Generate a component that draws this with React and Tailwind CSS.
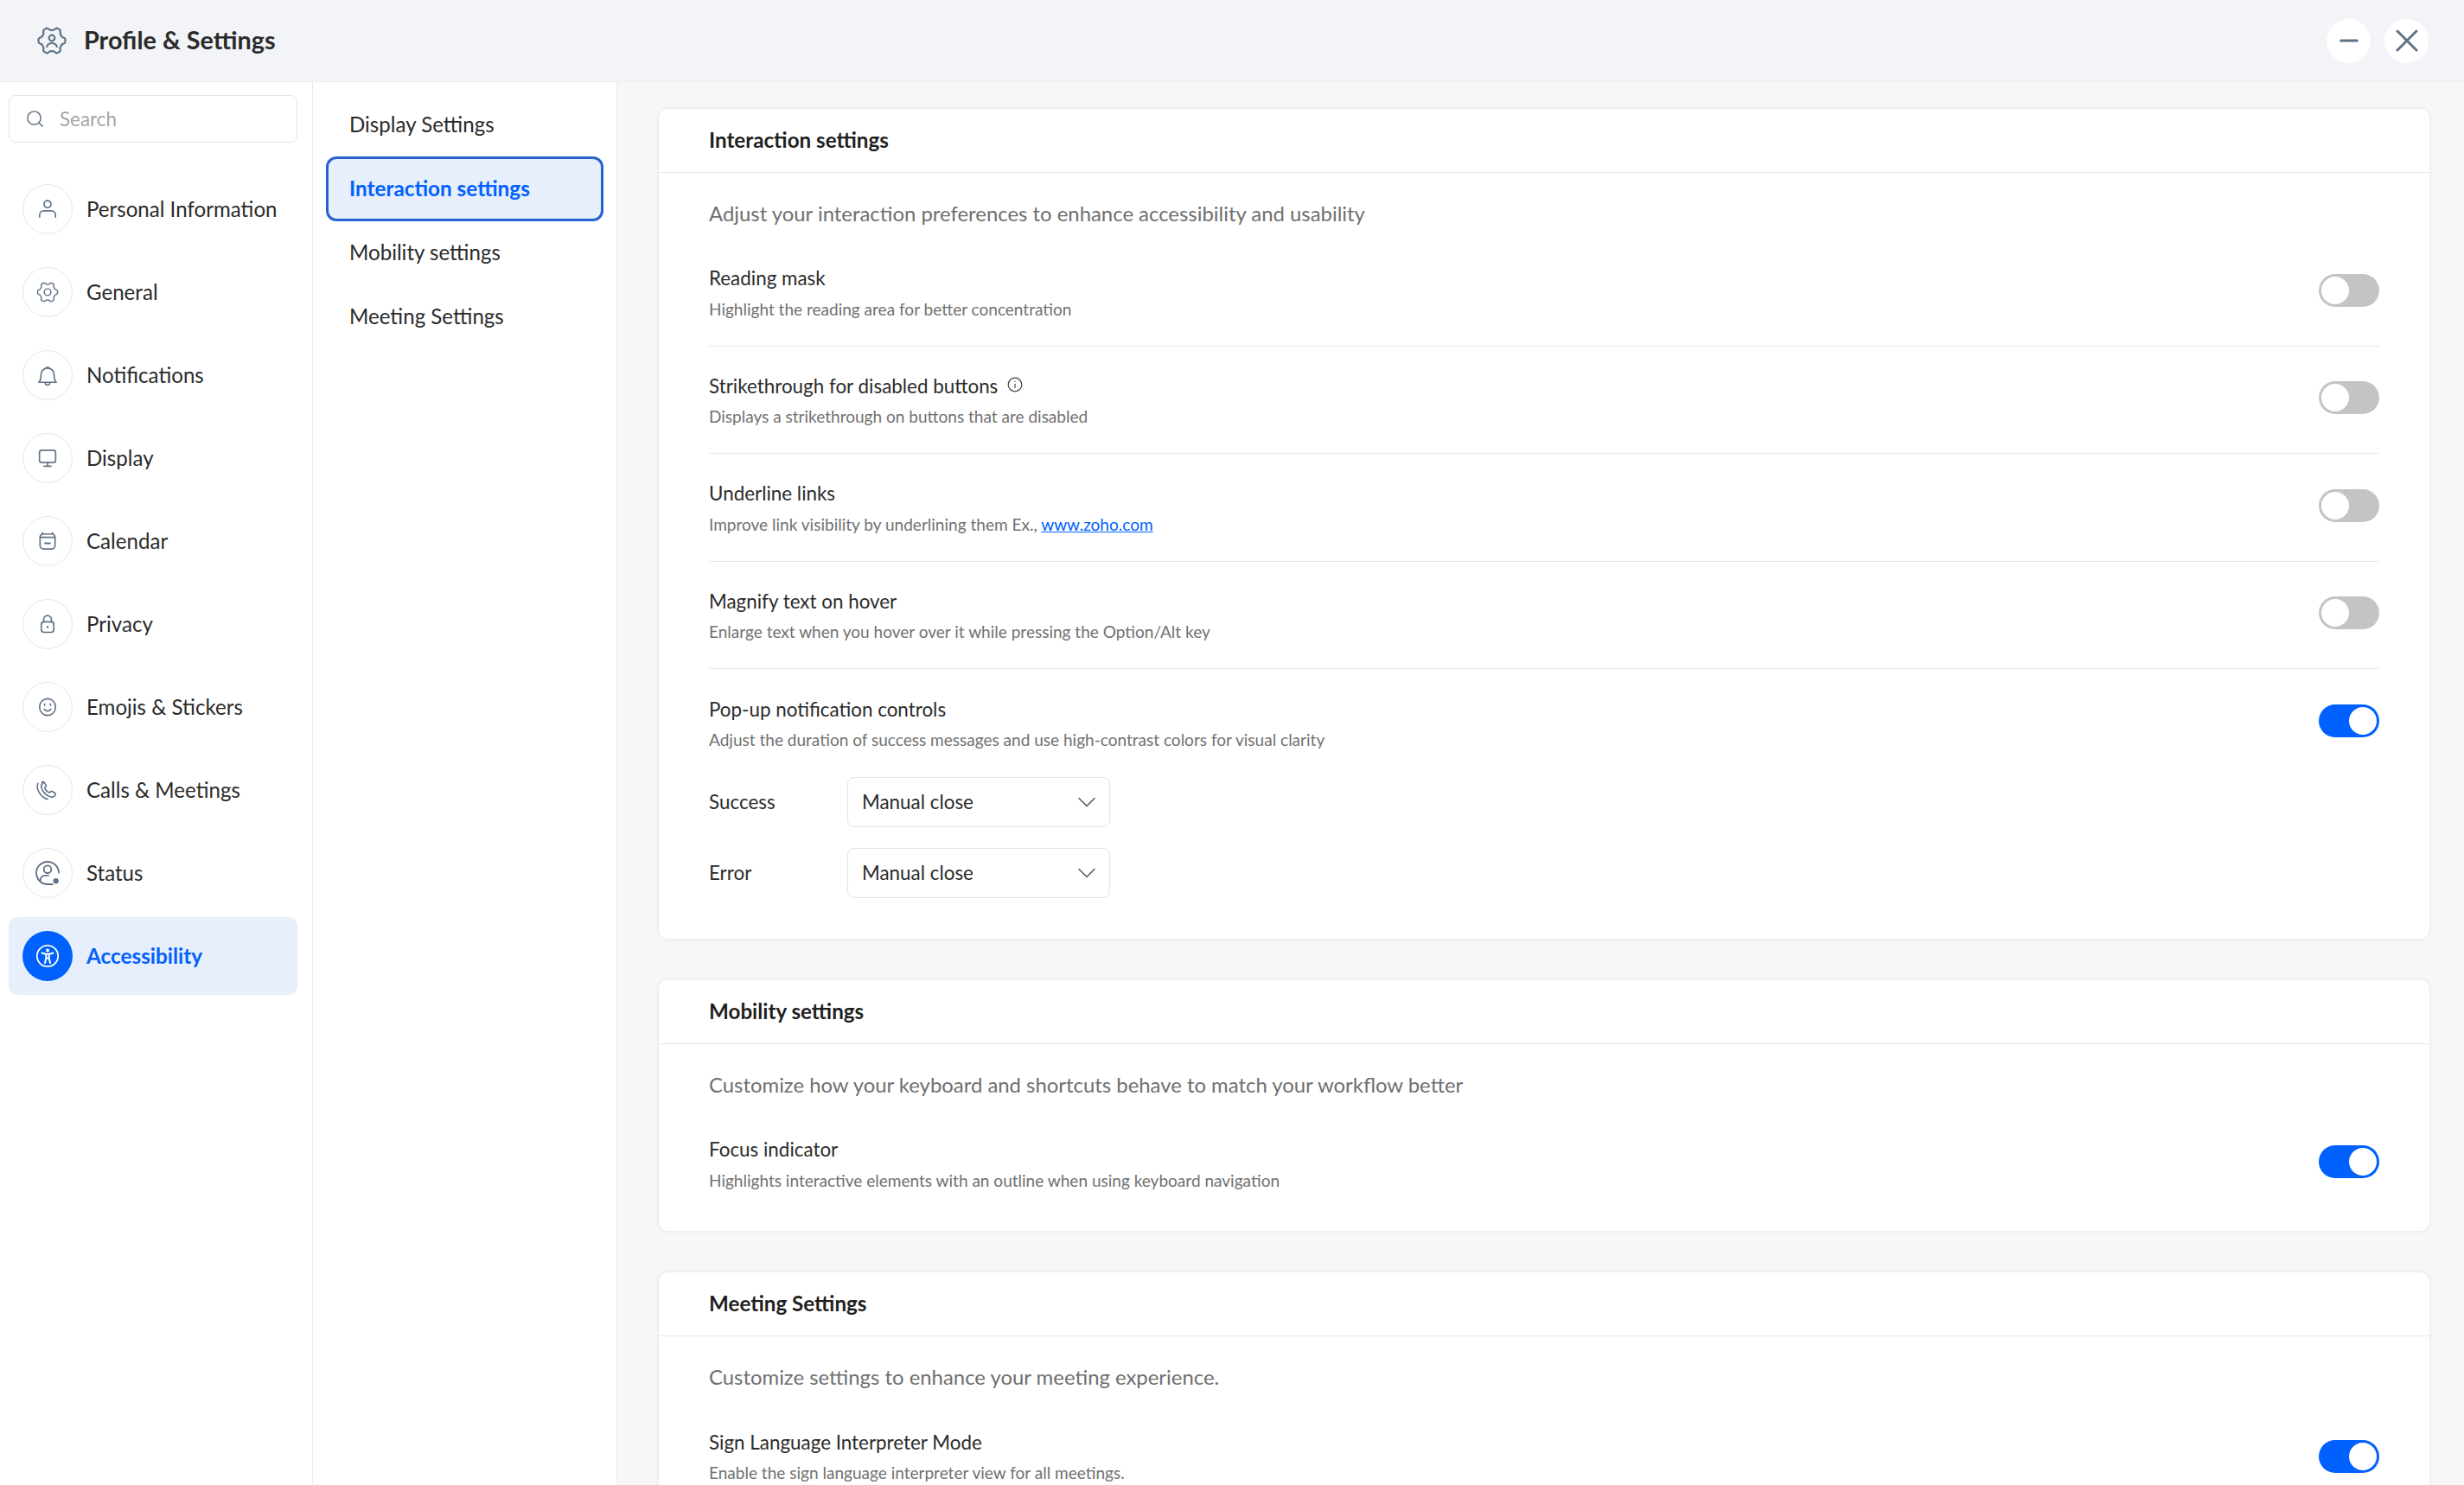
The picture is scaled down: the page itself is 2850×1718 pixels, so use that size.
import React from 'react';
import { Search, ChevronDown, X, Minus } from 'lucide-react';

// six lobed cog outline, flat tops and shallow valleys like the reference
const gearPath = (R) => {
  const pts = [];
  for (let i = 0; i < 96; i++) {
    const a = (i / 96) * Math.PI * 2;
    const c = Math.max(-1, Math.min(1, Math.cos(6 * a) * 1.700));
    const r = R * (0.895 + 0.105 * c);
    pts.push(`${(r * Math.cos(a)).toFixed(2)} ${(r * Math.sin(a)).toFixed(2)}`);
  }
  return `M${pts.join('L')}Z`;
};

// all nav icons are drawn around 0,0 so they sit in the middle of the circle
const Ico = ({ children, color = '#5f7286', sw = 1.7 }) => (
  <svg width="58" height="58" viewBox="-29 -29 58 58" fill="none" stroke={color} strokeWidth={sw} strokeLinecap="round" strokeLinejoin="round">
    {children}
  </svg>
);

const icons = {
  person: (
    <Ico>
      <circle cx="0" cy="-6" r="4.200" />
      <path d="M-9.500 9.500V7a5 5 0 0 1 5-5h9a5 5 0 0 1 5 5v2.500" />
    </Ico>
  ),
  gear: (
    <Ico sw={1.500}>
      <path d={gearPath(12)} />
      <circle cx="0" cy="0" r="4" />
    </Ico>
  ),
  bell: (
    <Ico>
      <path d="M-10.500 8.500h21c-2-2-2.600-3.600-2.600-6.500v-2.500a7.900 7.900 0 0 0-15.800 0V2c0 2.900-.6 4.500-2.600 6.500z" />
      <path d="M-1.700-8.200a1.800 1.800 0 0 1 3.400 0" />
      <path d="M-2.800 9a2.800 2.800 0 0 0 5.600 0" />
    </Ico>
  ),
  monitor: (
    <Ico>
      <rect x="-9.700" y="-9.500" width="19.400" height="14.800" rx="2.800" />
      <path d="M0 5.300v4.200M-4.200 9.700h8.400" />
    </Ico>
  ),
  calendar: (
    <Ico>
      <rect x="-9" y="-8.500" width="18" height="18" rx="4" />
      <path d="M-9-4.500h18M-6-10v2M6-10v2" />
      <path d="M-3 2.500h6" strokeWidth="2" />
    </Ico>
  ),
  lock: (
    <Ico>
      <rect x="-7.500" y="-2.700" width="15" height="12.500" rx="3.200" />
      <path d="M-4.700-2.500v-3a4.700 4.700 0 0 1 9.400 0v3" />
      <circle cx="0" cy="3.500" r="0.500" />
    </Ico>
  ),
  smile: (
    <Ico>
      <rect x="-9.500" y="-10" width="19" height="20" rx="9.500" />
      <path d="M-4 2.500c2 3 6 3 8 0" />
      <path d="M-3.500-3.500v1.500M3.500-3.500v1.500" />
    </Ico>
  ),
  phone: (
    <Ico>
      <path d="M-6.700-9.500c1-.7 2-.4 2.700.5l2 2.800c.6.900.4 1.800-.4 2.500l-1 .9c.8 2.700 3 5 5.900 6l1-1.100c.7-.8 1.600-.9 2.500-.3l2.700 1.800c.9.600 1.200 1.700.5 2.700-1 1.600-3 2.500-5.100 2-5.500-1.300-10.400-6.300-11.600-11.800-.4-2.200.5-4.100 2.700-6z" />
      <path d="M-11.500-8c-1.500 3-.8 7 1.500 11 2.400 4 6 7 10 8" />
    </Ico>
  ),
  status: (
    <Ico sw={1.900}>
      <path d="M13.500-.5a13.500 13.500 0 1 0-13.500 14h6" />
      <circle cx="0" cy="-4.500" r="4.500" />
      <path d="M-8.500 9v-.5a5.500 5.500 0 0 1 5.500-5.500h4" />
      <circle cx="10" cy="9.500" r="3.200" fill="#5f7286" stroke="none" />
    </Ico>
  ),
  access: (
    <Ico color="#fff" sw={1.800}>
      <circle cx="0" cy="0" r="12.200" />
      <circle cx="0" cy="-6.500" r="2" fill="#fff" stroke="none" />
      <path d="M-6.500-3.500 -2-2.200H2L6.500-3.500M-1.700-2v4.500L-3 8M1.700-2v4.500L3 8M-1.200 2.500H1.200" strokeWidth="2" />
    </Ico>
  ),
};

const navItems = [
  ['Personal Information', 'person'],
  ['General', 'gear'],
  ['Notifications', 'bell'],
  ['Display', 'monitor'],
  ['Calendar', 'calendar'],
  ['Privacy', 'lock'],
  ['Emojis & Stickers', 'smile'],
  ['Calls & Meetings', 'phone'],
  ['Status', 'status'],
];

const NavRow = ({ label, icon }) => (
  <div className="flex items-center h-[96px] pl-[16px] shrink-0">
    <div className="w-[58px] h-[58px] rounded-full border border-[#e6e6e6] flex items-center justify-center">{icons[icon]}</div>
    <span className="ml-[16px] text-[24.100px] text-[#2b2b2b]">{label}</span>
  </div>
);

const Toggle = ({ on, low }) => (
  <div className={`${on ? 'bg-[#0061fe] justify-end pr-[3px]' : 'bg-[#c4c4c4] pl-[3px]'} ${low ? 'mt-[2px]' : 'mb-1'} w-[70px] h-[38px] rounded-full flex items-center shrink-0`}>
    <div className="w-[32px] h-[32px] rounded-full bg-white" />
  </div>
);

const Row = ({ title, sub, on, low, info, last, children }) => (
  <div className={last ? 'flex items-center justify-between h-[124.500px]' : 'flex items-center justify-between h-[124.500px] border-b border-[#e8e8e8]'}>
    <div className="mt-1">
      <div className="flex items-center h-[29px] text-[22.400px] text-[#2b2b2b]">
        {title}
        {info && (
          <svg className="ml-[11px] mb-[4px]" width="18" height="18" viewBox="0 0 18 18" fill="none" stroke="#444" strokeWidth="1.200">
            <circle cx="9" cy="9" r="7.800" />
            <path d="M9 8v5M9 5v1" />
          </svg>
        )}
      </div>
      <div className="mt-[6px] h-[29px] leading-[29px] text-[19.050px] text-[#717171]">{sub || children}</div>
    </div>
    <Toggle on={on} low={low} />
  </div>
);

const Card = ({ title, desc, children }) => (
  <section className="bg-white rounded-[10px] shadow-[0_0_5px_rgba(0,0,0,0.09)] shrink-0">
    <h2 className="h-[74px] flex items-center px-[58px] border-b border-[#e8e8e8] text-[24.200px] font-bold text-[#1f1f1f]">{title}</h2>
    <div className="px-[58px]">
      <p className="pt-[32px] pb-[14px] leading-[30px] text-[23.900px] text-[#6f6f6f]">{desc}</p>
      {children}
    </div>
  </section>
);

const Select = ({ label }) => (
  <div className="flex items-center">
    <span className="w-[160px] text-[22.400px] text-[#2b2b2b]">{label}</span>
    <div className="w-[304px] h-[58px] rounded-[8px] border border-[#e4e4e4] flex items-center justify-between pl-[16px] pr-[8px]">
      <span className="text-[22.400px] text-[#2b2b2b]">Manual close</span>
      <ChevronDown size={36} strokeWidth={1} color="#555" />
    </div>
  </div>
);

const App = () => {
  return (
    <div className="h-[1718px] overflow-hidden flex flex-col bg-white font-['Lato','Liberation_Sans',sans-serif]">
      <header className="h-[95px] shrink-0 bg-[#f2f4f8] border-b border-[#eaecef] flex items-center pl-[43px] pr-[41px]">
        <svg width="34" height="34" viewBox="-17 -17 34 34" fill="none" stroke="#5f7286" strokeWidth="2.200" strokeLinecap="round" strokeLinejoin="round">
          <path d={gearPath(15.500)} />
          <circle cx="0" cy="-3" r="3.300" />
          <path d="M-5.800 7c.8-2.800 3-4 5.800-4s5 1.200 5.800 4" />
        </svg>
        <h1 className="ml-[20px] text-[28.800px] font-bold text-[#2a2a2a]">Profile &amp; Settings</h1>
        <div className="ml-auto flex gap-[16px]">
          <button className="w-[51px] h-[51px] rounded-full bg-white flex items-center justify-center"><Minus size={32} strokeWidth={2.250} color="#5f7286" /></button>
          <button className="w-[51px] h-[51px] rounded-full bg-white flex items-center justify-center"><X size={44} strokeWidth={1.600} color="#5f7286" /></button>
        </div>
      </header>
      <div className="flex-1 flex min-h-0">
        <aside className="w-[362px] shrink-0 border-r border-[#eaeaea] pl-[10px] pr-[17px] pt-[15px]">
          <div className="h-[55px] rounded-[8px] border border-[#e4e4e4] flex items-center pl-[18px]">
            <Search size={23} strokeWidth={1.500} color="#5f7286" />
            <span className="ml-[17px] text-[22.400px] text-[#a6a6a6]">Search</span>
          </div>
          <div className="mt-[29px] flex flex-col">
            {navItems.map(([label, icon]) => <NavRow key={label} label={label} icon={icon} />)}
            <div className="mt-[3px] h-[90px] rounded-[10px] bg-[#e7eefc] flex items-center pl-[16px]">
              <div className="w-[58px] h-[58px] rounded-full bg-[#0061fe] flex items-center justify-center">{icons.access}</div>
              <span className="ml-[16px] text-[24.300px] font-bold text-[#0061fe]">Accessibility</span>
            </div>
          </div>
        </aside>
        <nav className="w-[352px] shrink-0 border-r border-[#eaeaea] pl-[15px] pr-[15px] pt-[13px] flex flex-col">
          <div className="h-[73px] flex items-center pl-[27px] text-[24.100px] text-[#2b2b2b]">Display Settings</div>
          <div className="h-[75px] rounded-[12px] border-[3px] border-[#2561d0] bg-[#e7eefc] flex items-center pl-[24px] text-[24.300px] font-bold text-[#0061fe]">Interaction settings</div>
          <div className="h-[73px] flex items-center pl-[27px] text-[24.100px] text-[#2b2b2b]">Mobility settings</div>
          <div className="h-[74px] flex items-center pl-[27px] text-[24.100px] text-[#2b2b2b]">Meeting Settings</div>
        </nav>
        <main className="flex-1 min-w-0 bg-[#f7f7f7] pl-[48px] pr-[40px] pt-[31px] flex flex-col gap-[48px]">
          <Card title="Interaction settings" desc="Adjust your interaction preferences to enhance accessibility and usability">
            <Row title="Reading mask" sub="Highlight the reading area for better concentration" />
            <Row title="Strikethrough for disabled buttons" info sub="Displays a strikethrough on buttons that are disabled" />
            <Row title="Underline links">
              Improve link visibility by underlining them Ex., <a className="text-[#0061fe] underline">www.zoho.com</a>
            </Row>
            <Row title="Magnify text on hover" sub="Enlarge text when you hover over it while pressing the Option/Alt key" />
            <Row title="Pop-up notification controls" on last sub="Adjust the duration of success messages and use high-contrast colors for visual clarity" />
            <div className="flex flex-col gap-[24px] pb-[47px]">
              <Select label="Success" />
              <Select label="Error" />
            </div>
          </Card>
          <Card title="Mobility settings" desc="Customize how your keyboard and shortcuts behave to match your workflow better">
            <div className="pb-[16px]">
              <Row title="Focus indicator" on last sub="Highlights interactive elements with an outline when using keyboard navigation" />
            </div>
          </Card>
          <Card title="Meeting Settings" desc="Customize settings to enhance your meeting experience.">
            <Row title="Sign Language Interpreter Mode" on low last sub="Enable the sign language interpreter view for all meetings." />
          </Card>
        </main>
      </div>
    </div>
  );
};

export default App;
